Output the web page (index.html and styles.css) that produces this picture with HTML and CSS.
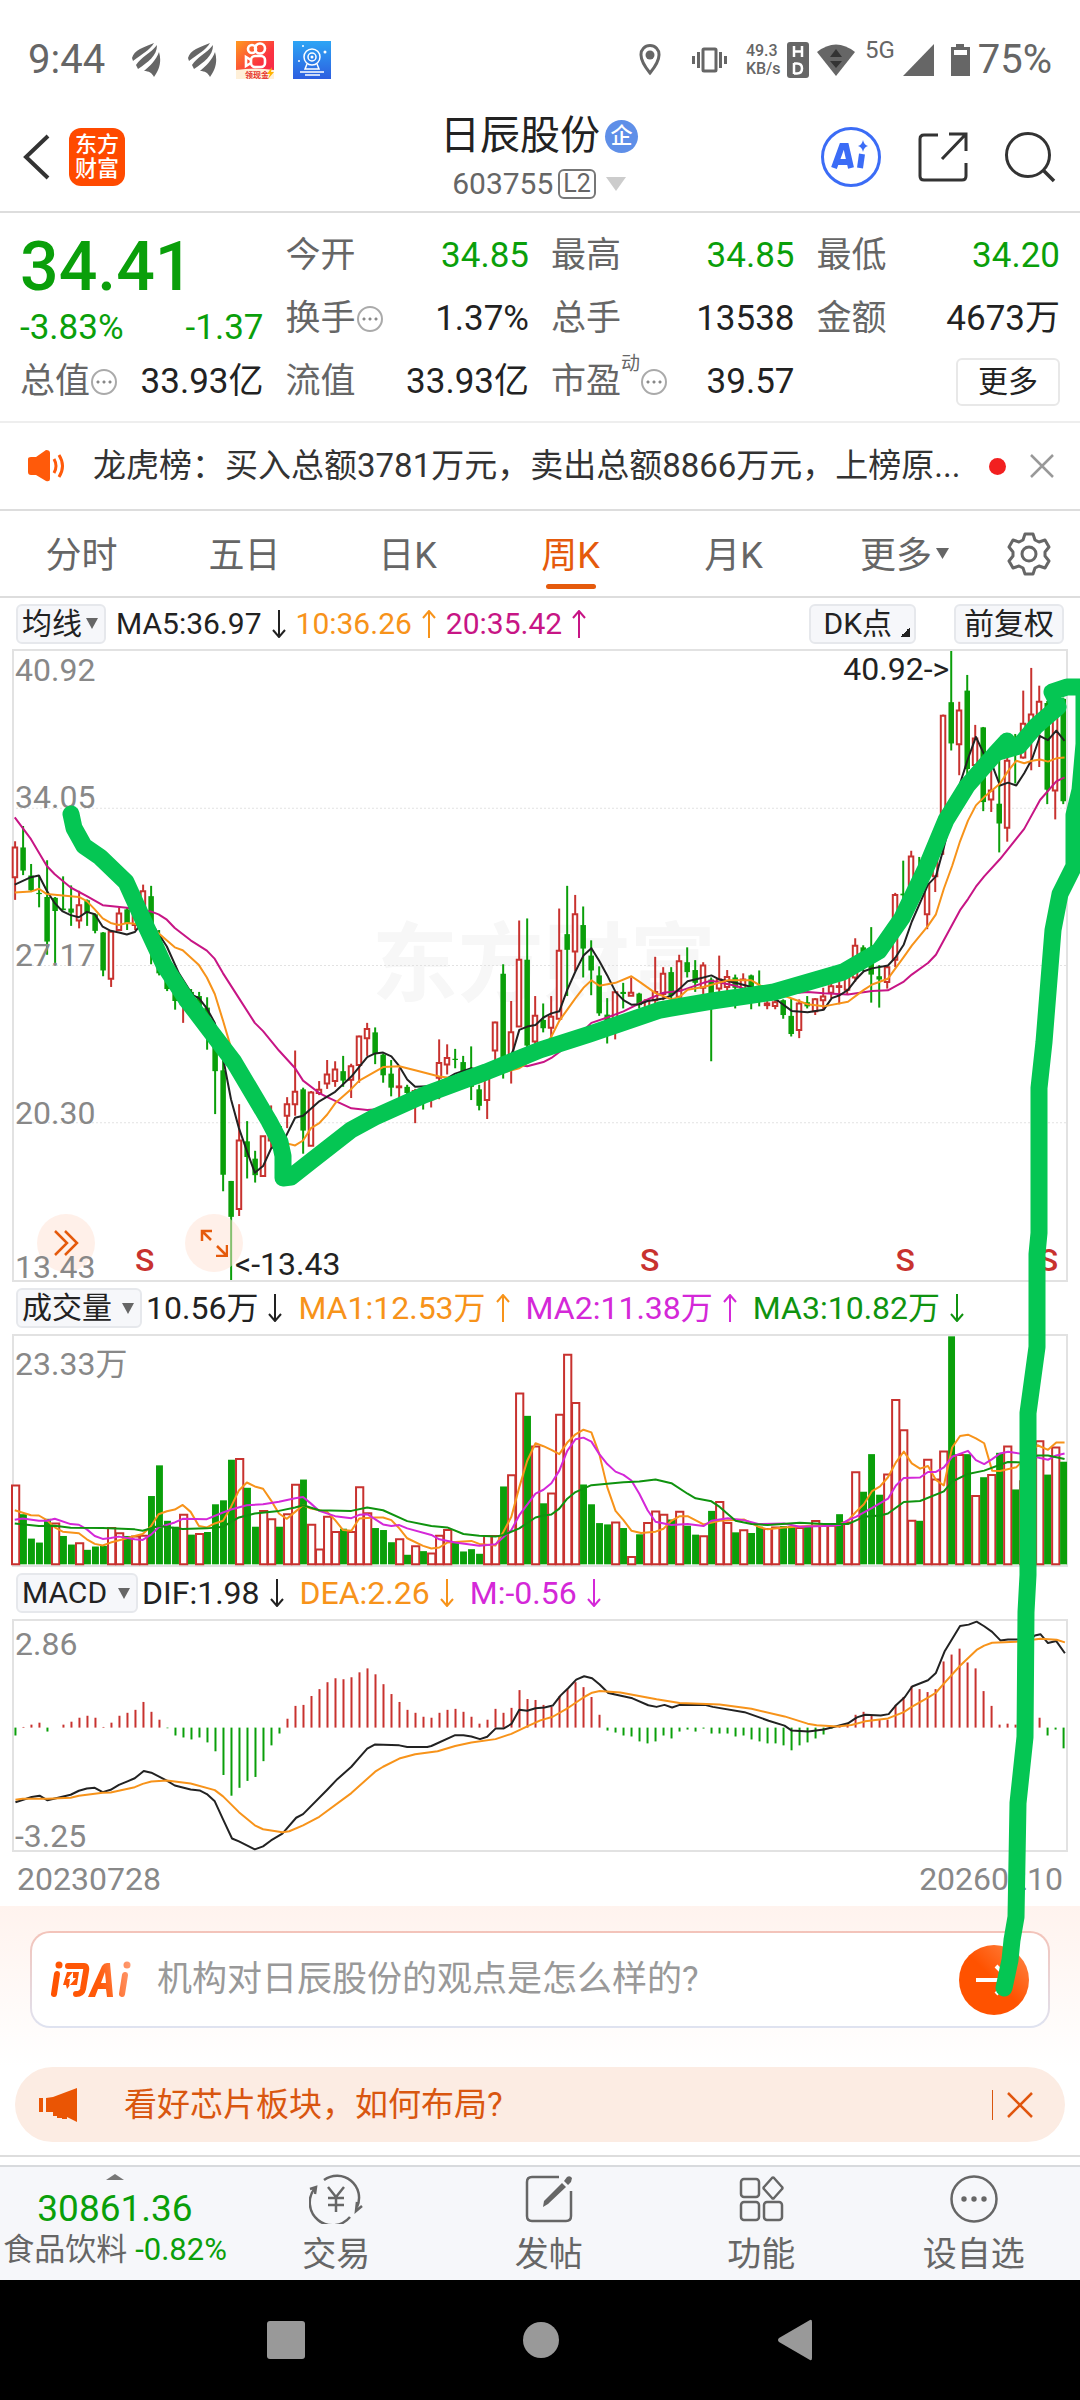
FILE: index.html
```html
<!DOCTYPE html>
<html lang="zh-CN">
<head>
<meta charset="utf-8">
<meta name="viewport" content="width=device-width, initial-scale=1">
<title>日辰股份 603755</title>
<link rel="stylesheet" href="styles.css">
</head>
<body>
<div class="page">

<div class="status">
  <span class="clock">9:44</span>
  <svg class="wing" width="30" height="34" viewBox="0 0 28 34"><path d="M0 15C2 7 12 4 22 0C18 7 10 11 1 18ZM4 22C9 14 19 10 25 2C25 13 16 19 6 26ZM12 28C18 23 24 17 27 9C30 19 27 27 22 34C20 30 17 28 12 28Z"/></svg>
  <svg class="wing" width="30" height="34" viewBox="0 0 28 34"><path d="M0 15C2 7 12 4 22 0C18 7 10 11 1 18ZM4 22C9 14 19 10 25 2C25 13 16 19 6 26ZM12 28C18 23 24 17 27 9C30 19 27 27 22 34C20 30 17 28 12 28Z"/></svg>
  <svg class="app" width="38" height="38" viewBox="0 0 38 38">
    <defs><linearGradient id="ks" x1="0" y1="0" x2="1" y2="1"><stop offset="0" stop-color="#ff9a1f"/><stop offset=".6" stop-color="#fb3340"/><stop offset="1" stop-color="#f5264f"/></linearGradient></defs>
    <rect width="38" height="38" fill="url(#ks)"/>
    <g fill="none" stroke="#fff" stroke-width="2.6"><circle cx="16" cy="8" r="4"/><circle cx="24" cy="7.500" r="5"/><rect x="15" y="15" width="14" height="11" rx="4"/><path d="M15 19L10 16V25L15 22"/></g>
    <path d="M0 29Q19 26 38 29V38H0Z" fill="#fff0d8"/>
    <text x="9" y="37" class="app-text">领现金</text>
    <path d="M36 26L31 33H34L32 38L38 31H35Z" fill="#ffb400"/>
  </svg>
  <svg class="app" width="38" height="38" viewBox="0 0 38 38">
    <defs><linearGradient id="cam" x1="0" y1="0" x2="0" y2="1"><stop offset="0" stop-color="#2da5f5"/><stop offset="1" stop-color="#2d5ee0"/></linearGradient></defs>
    <rect width="38" height="38" fill="url(#cam)"/>
    <g fill="none" stroke="#fff" stroke-width="1.500"><circle cx="19" cy="16" r="8"/><circle cx="19" cy="16" r="4"/><path d="M14 23L12 28H26L24 23M7 31H31M12 34H27"/></g>
    <g fill="#fff"><circle cx="19" cy="16" r="1.500"/><circle cx="10" cy="5" r="1"/><circle cx="32" cy="11" r="1.500"/><circle cx="6" cy="20" r="1"/></g>
  </svg>
  <span class="spacer"></span>
  <svg width="45" height="32" viewBox="0 0 45 32"><path d="M11 1.500A9 9 0 0 0 2 11C2 18 11 29 11 29S20 18 20 11A9 9 0 0 0 11 1.500Z" fill="none" stroke="#666" stroke-width="3"/><circle cx="11" cy="11" r="4.500" fill="#666"/></svg>
  <svg width="46" height="30" viewBox="0 0 46 30"><rect x="11" y="4" width="13" height="22" rx="1" fill="none" stroke="#666" stroke-width="3"/><path d="M1.500 11V19M6.500 7V23M28.500 7V23M33.500 11V19" stroke="#666" stroke-width="3"/></svg>
  <span class="speed">49.3<br>KB/s</span>
  <svg width="22" height="36" viewBox="0 0 22 36"><rect width="22" height="36" rx="3" fill="#666"/><path d="M7 4V15M15 4V15M7 9.500H15M7 21V32M7 21.500H10Q15 21.500 15 26.500T10 31.500H7" fill="none" stroke="#fff" stroke-width="2.500"/></svg>
  <svg width="40" height="32" viewBox="0 0 40 32"><path d="M0 8Q19 -7 38 8L19 32Z" fill="#666"/><path d="M13 13L19 5L25 13ZM13 17H25L19 24Z" fill="#333"/></svg>
  <span class="net">5G</span>
  <svg width="31" height="32" viewBox="0 0 31 32"><path d="M31 0V32H0Z" fill="#666"/></svg>
  <svg width="28" height="32" viewBox="0 0 28 32"><path d="M14 0H22V3H28V32H9V3H14Z" fill="#666"/><rect x="12" y="6" width="13" height="5" fill="#fff"/></svg>
  <span class="clock">75%</span>
</div>

<header class="head">
  <div class="head-left">
    <button class="icon" aria-label="返回"><svg width="28" height="46" viewBox="0 0 28 46"><path d="M26 2L4 23L26 44" fill="none" stroke="#333" stroke-width="4"/></svg></button>
    <a class="brand" href="#">东方<br>财富</a>
  </div>
  <div class="head-mid">
    <h1>日辰股份<span class="badge">企</span></h1>
    <div class="code">603755<span class="level">L2</span><svg width="20" height="14" viewBox="0 0 20 14"><path d="M0 0H20L10 14Z" fill="#ccc"/></svg></div>
  </div>
  <div class="head-right">
    <button class="icon" aria-label="AI"><svg width="62" height="62" viewBox="0 0 62 62"><circle cx="31" cy="31" r="28.500" fill="none" stroke="#3b6cf6" stroke-width="3"/><path d="M14 42L22 20H26L31 42M17 36H29" fill="none" stroke="#3b6cf6" stroke-width="6"/><path d="M42 28L40 42" stroke="#3b6cf6" stroke-width="6"/><path d="M43 14Q44 19 48 20Q44 21 43 26Q42 21 38 20Q42 19 43 14Z" fill="#3b6cf6"/></svg></button>
    <button class="icon" aria-label="分享"><svg width="50" height="50" viewBox="0 0 50 50"><path d="M20 3H6Q2 3 2 7V44Q2 48 6 48H44Q48 48 48 44V31M31 2H48V19M47 3L24 27" fill="none" stroke="#333" stroke-width="3"/></svg></button>
    <button class="icon" aria-label="搜索"><svg width="52" height="52" viewBox="0 0 52 52"><circle cx="24" cy="24" r="21.500" fill="none" stroke="#333" stroke-width="3"/><path d="M39 39L50 50" stroke="#333" stroke-width="3.500"/></svg></button>
  </div>
</header>

<section class="quote">
  <div class="price-box">
    <strong class="price">34.41</strong>
    <div class="pair down"><span>-3.83%</span><span>-1.37</span></div>
  </div>
  <div class="pair"><span>今开</span><b class="down">34.85</b></div>
  <div class="pair"><span>最高</span><b class="down">34.85</b></div>
  <div class="pair"><span>最低</span><b class="down">34.20</b></div>
  <div class="pair"><span>换手<i class="info"></i></span><b>1.37%</b></div>
  <div class="pair"><span>总手</span><b>13538</b></div>
  <div class="pair"><span>金额</span><b>4673万</b></div>
  <div class="pair"><span>总值<i class="info"></i></span><b>33.93亿</b></div>
  <div class="pair"><span>流值</span><b>33.93亿</b></div>
  <div class="pair"><span>市盈<sup>动</sup><i class="info"></i></span><b>39.57</b></div>
  <div class="pair"><button class="more">更多</button></div>
</section>

<div class="news">
  <svg width="38" height="32" viewBox="0 0 38 32"><path d="M0 9Q0 7 3 7H8L18 0Q22 0 22 3V29Q22 32 18 31L8 25H3Q0 25 0 22Z" fill="#ff5a0a"/><path d="M26 9Q30 16 26 23M31 5Q38 16 31 27" fill="none" stroke="#ff5a0a" stroke-width="3"/></svg>
  <a class="news-text" href="#">龙虎榜：买入总额3781万元，卖出总额8866万元，上榜原...</a>
  <span class="dot"></span>
  <button class="icon" aria-label="关闭"><svg width="24" height="24" viewBox="0 0 24 24"><path d="M1 1L23 23M23 1L1 23" stroke="#999" stroke-width="2.500"/></svg></button>
</div>

<nav class="tabs">
  <a href="#">分时</a>
  <a href="#">五日</a>
  <a href="#">日K</a>
  <a href="#" class="on">周K</a>
  <a href="#">月K</a>
  <a href="#" class="menu">更多<svg width="13" height="20" viewBox="0 0 13 20"><path d="M0 2H13L6.500 13Z" fill="#666"/></svg></a>
  <button class="icon" aria-label="设置"><svg width="44" height="44" viewBox="0 0 44 44"><g fill="none" stroke="#666" stroke-width="3" stroke-linejoin="round"><path d="M18 2H26L28 8L32 10L38 8L42 15L38 20V24L42 29L38 36L32 34L28 36L26 42H18L16 36L12 34L6 36L2 29L6 24V20L2 15L6 8L12 10L16 8Z"/><circle cx="22" cy="22" r="7"/></g></svg></button>
</nav>

<div class="legend small">
  <span class="drop"><select aria-label="均线"><option>均线</option></select></span>
  <span class="c-black">MA5:36.97<svg class="arr" viewBox="0 0 14 28"><path d="M7 0V27M1 20L7 27L13 20"/></svg></span>
  <span class="c-orange">10:36.26<svg class="arr" viewBox="0 0 14 28"><path d="M7 28V1M1 8L7 1L13 8"/></svg></span>
  <span class="c-pink">20:35.42<svg class="arr" viewBox="0 0 14 28"><path d="M7 28V1M1 8L7 1L13 8"/></svg></span>
  <span class="spacer"></span>
  <button class="chip corner">DK点</button>
  <button class="chip">前复权</button>
</div>

<div class="chart k-chart">
  <span class="mark-bg">东方财富</span>
  <svg id="kline" class="plot" viewBox="36 24 3062 1524" preserveAspectRatio="none"></svg>
  <span class="axis a1">40.92</span>
  <span class="axis a2">34.05</span>
  <span class="axis a3">27.17</span>
  <span class="axis a4">20.30</span>
  <button class="round r1" aria-label="展开"><svg width="26" height="28" viewBox="0 0 26 28"><path d="M2 2L14 14L2 26M12 2L24 14L12 26" fill="none" stroke="#e55a0c" stroke-width="2.500"/></svg></button>
  <button class="round r2" aria-label="全屏"><svg width="28" height="28" viewBox="0 0 28 28"><path d="M12 2H2V12M2 2L11 11M16 27H27V16M27 27L17 17" fill="none" stroke="#e55a0c" stroke-width="2.500"/></svg></button>
  <span class="axis a5">13.43</span>
  <span class="tip high">40.92-&gt;</span>
  <span class="tip low">&lt;-13.43</span>
  <b class="sell s1">S</b><b class="sell s2">S</b><b class="sell s3">S</b><b class="sell s4">S</b>
</div>

<div class="legend">
  <span class="drop wide"><select aria-label="成交量"><option>成交量</option></select></span>
  <span class="c-black">10.56万<svg class="arr" viewBox="0 0 14 28"><path d="M7 0V27M1 20L7 27L13 20"/></svg></span>
  <span class="c-orange">MA1:12.53万<svg class="arr" viewBox="0 0 14 28"><path d="M7 28V1M1 8L7 1L13 8"/></svg></span>
  <span class="c-purple">MA2:11.38万<svg class="arr" viewBox="0 0 14 28"><path d="M7 28V1M1 8L7 1L13 8"/></svg></span>
  <span class="c-green">MA3:10.82万<svg class="arr" viewBox="0 0 14 28"><path d="M7 0V27M1 20L7 27L13 20"/></svg></span>
</div>
<div class="chart sub-chart">
  <svg id="volume" class="plot" viewBox="36 162 3062 694" preserveAspectRatio="none"></svg>
  <span class="axis v1">23.33万</span>
</div>

<div class="legend">
  <span class="drop wide"><select aria-label="MACD"><option>MACD</option></select></span>
  <span class="c-black">DIF:1.98<svg class="arr" viewBox="0 0 14 28"><path d="M7 0V27M1 20L7 27L13 20"/></svg></span>
  <span class="c-orange">DEA:2.26<svg class="arr" viewBox="0 0 14 28"><path d="M7 0V27M1 20L7 27L13 20"/></svg></span>
  <span class="c-purple">M:-0.56<svg class="arr" viewBox="0 0 14 28"><path d="M7 0V27M1 20L7 27L13 20"/></svg></span>
</div>
<div class="chart sub-chart">
  <svg id="macd" class="plot" viewBox="36 147 3062 696" preserveAspectRatio="none"></svg>
  <span class="axis m1">2.86</span>
  <span class="axis m2">-3.25</span>
</div>
<div class="dates"><span>20230728</span><span>20260210</span></div>

<section class="ask">
  <form class="ask-box">
    <svg width="80" height="38" viewBox="0 0 80 38">
      <defs><linearGradient id="ai" gradientUnits="userSpaceOnUse" x1="0" y1="30" x2="80" y2="8"><stop offset="0" stop-color="#ff5200"/><stop offset=".6" stop-color="#ff5a0a"/><stop offset="1" stop-color="#ff9a70"/></linearGradient></defs>
      <g fill="none" stroke="url(#ai)" stroke-width="6" stroke-linejoin="round" stroke-linecap="round"><path d="M6 13L3 33M17 5H33Q36 5 35 10L32 28Q31 33 25 33M74 14L71 33"/></g>
      <g fill="url(#ai)"><circle cx="8" cy="4" r="3.500"/><circle cx="76" cy="4" r="3.500"/><path d="M16 11H28L26 24H19L16 28L15 24H12Z"/><path fill-rule="evenodd" d="M37 36L51 5Q53 2 56 2H59L62 36H56L55 28H47L44 36ZM50 22H55L54 11Z"/></g>
      <path d="M22 11L16 18H19L18 25L25 17H22Z" fill="#fff"/>
    </svg>
    <input type="text" aria-label="问AI" placeholder="机构对日辰股份的观点是怎么样的?">
    <button type="button" class="send" aria-label="发送"><svg width="36" height="32" viewBox="0 0 36 32"><path d="M0 16H34M20 2L34 16L20 30" fill="none" stroke="#fff" stroke-width="4"/></svg></button>
  </form>
</section>

<div class="promo">
  <svg width="40" height="34" viewBox="0 0 40 34"><path d="M0 10H4V24H0ZM7 10L14 9L38 0V34L30 30L28 29V31H23V30H18V28H14V24H7Z" fill="#ea5504"/></svg>
  <a href="#">看好芯片板块，如何布局?</a>
  <span class="bar"></span>
  <button class="icon" aria-label="关闭"><svg width="26" height="26" viewBox="0 0 26 26"><path d="M1 1L25 25M25 1L1 25" stroke="#e0560f" stroke-width="2.500"/></svg></button>
</div>

<nav class="bottom">
  <a class="index" href="#">
    <svg width="18" height="6" viewBox="0 0 18 6"><path d="M0 6H18L9 0Z" fill="#777"/></svg>
    <span class="idx-num">30861.36</span>
    <span class="idx-row">食品饮料<em>-0.82%</em></span>
  </a>
  <a href="#"><svg width="54" height="50" viewBox="0 0 54 50"><g fill="none" stroke="#666" stroke-width="2.500"><path d="M15 6A22 22 0 0 1 48 33M41 43A22 22 0 0 1 6 14M1 15L7 13L6 20M53 32L47 37L48 28M19 13L27 23L35 13M27 23V38M19 24H35M19 31H35"/></g></svg>交易</a>
  <a href="#"><svg width="48" height="50" viewBox="0 0 48 50"><path d="M34 3H7Q2 3 2 8V42Q2 47 7 47H41Q46 47 46 42V17" fill="none" stroke="#666" stroke-width="2.500"/><path d="M18 33L19 27L37 9L41 13L23 30ZM39 7L42 3Q45 1 47 4L46 8L43 11Z" fill="#666"/></svg>发帖</a>
  <a href="#"><svg width="46" height="50" viewBox="0 0 46 50"><g fill="none" stroke="#666" stroke-width="2.500"><rect x="3" y="5" width="18" height="18" rx="3"/><rect x="3" y="28" width="18" height="18" rx="3"/><rect x="26" y="28" width="18" height="18" rx="3"/><path d="M34 4Q35 3 36 4L44 13Q45 14 44 15L36 24Q35 25 34 24L26 15Q25 14 26 13Z"/></g></svg>功能</a>
  <a href="#"><svg width="50" height="50" viewBox="0 0 50 50"><circle cx="25" cy="25" r="22.500" fill="none" stroke="#666" stroke-width="2.500"/><g fill="#666"><circle cx="15" cy="25" r="2.700"/><circle cx="25" cy="25" r="2.700"/><circle cx="35" cy="25" r="2.700"/></g></svg>设自选</a>
</nav>

<div class="sys">
  <button class="icon" aria-label="最近任务"><svg width="38" height="38" viewBox="0 0 38 38"><rect width="38" height="38" rx="3" fill="#999"/></svg></button>
  <button class="icon" aria-label="主页"><svg width="36" height="36" viewBox="0 0 36 36"><circle cx="18" cy="18" r="18" fill="#999"/></svg></button>
  <button class="icon" aria-label="后退"><svg width="36" height="42" viewBox="0 0 36 42"><path d="M2 19L33 1Q35 0 35 3V39Q35 42 33 41L2 23Q0 21 2 19Z" fill="#999"/></svg></button>
</div>

<!-- hand drawn trend stroke -->
<svg class="ink" viewBox="0 0 1080 2400" preserveAspectRatio="none">
  <path d="M71 814L74 828L84 846L100 857L126 882L145 924L164 965L186 999L234 1062L269 1121L280 1142L283 1156V1178L291 1177L310 1162L351 1130L375 1117L424 1095L486 1072L540 1050L590 1034L660 1010L712 1001L774 992L843 972L879 951L902 918L926 868L946 820L967 786L995 754L1007 741L998 752L1019 746L1036 726L1058 707L1055 698L1052 692L1067 687H1084V744L1080 790L1074 815V866L1060 894L1053 930L1044 1042L1039 1088V1233L1037 1254V1347L1028 1413V1575L1026 1612L1025 1737L1018 1803L1016 1917L1012 1940L1010 1960L1004 1988"/>
</svg>
</div>
<script src="chart.js"></script>
</body>
</html>
```
FILE: styles.css
```css
* {
  box-sizing: border-box;
}
body {
  margin: 0;
  background: #fff;
  color: #222;
  font-family: Roboto, "Noto Sans CJK SC", sans-serif;
  font-size: 35px;
  line-height: 44px;
}
a {
  color: inherit;
  text-decoration: none;
}
svg {
  display: block;
  flex: none;
}
button, input, select {
  margin: 0;
  padding: 0;
  border: 0;
  background: none;
  color: inherit;
  font: inherit;
}
.page {
  position: relative;
  overflow: hidden;
}
.icon {
  display: flex;
  justify-content: center;
  align-items: center;
}
.spacer {
  flex: 1;
}
.down {
  color: #0a9f0a;
}

/* status bar */
.status {
  display: flex;
  align-items: center;
  gap: 8px;
  height: 110px;
  padding: 10px 28px 0;
  color: #666;
}
.clock {
  font-size: 40px;
}
.wing {
  margin-left: 18px;
  fill: #666;
}
.status .app {
  margin-left: 11px;
}
.app-text {
  font-size: 8px;
  font-weight: bold;
  fill: #e5322d;
}
.speed {
  width: 33px;
  font-size: 16px;
  line-height: 18px;
  font-weight: 500;
}
.net {
  align-self: flex-start;
  padding-top: 18px;
  font-size: 24px;
}

/* title bar */
.head {
  display: grid;
  grid-template-columns: 1fr auto 1fr;
  align-items: center;
  height: 103px;
  padding: 0 24px 0 22px;
  border-bottom: 2px solid #ddd;
}
.head-left, .head-right {
  display: flex;
  align-items: center;
  gap: 19px;
  padding-bottom: 8px;
}
.head-right {
  justify-content: flex-end;
  gap: 36px;
}
.brand {
  padding: 5px 6px;
  border-radius: 12px;
  background: #ff4a00;
  color: #fff;
  font-size: 22px;
  line-height: 24px;
  font-weight: 500;
}
.head-mid {
  padding-bottom: 5px;
}
h1 {
  display: flex;
  justify-content: center;
  align-items: center;
  gap: 5px;
  margin: 0;
  font-size: 40px;
  line-height: 52px;
  font-weight: 400;
}
.badge {
  width: 33px;
  height: 33px;
  border-radius: 50%;
  background: #5f8fe8;
  color: #fff;
  font-size: 22px;
  line-height: 32px;
  font-weight: 500;
  text-align: center;
}
.code {
  display: flex;
  justify-content: center;
  align-items: center;
  color: #666;
  font-size: 30px;
}
.level {
  margin: 0 10px 0 5px;
  padding: 0 3px;
  border: 2px solid #777;
  border-radius: 6px;
  font-size: 25px;
  line-height: 26px;
}

/* quote grid */
.quote {
  display: grid;
  grid-template-columns: repeat(4, 1fr);
  grid-auto-rows: 63px;
  column-gap: 22px;
  padding: 11px 20px 8px;
  border-bottom: 2px solid #eee;
}
.price-box {
  grid-row: span 2;
}
.price {
  display: block;
  padding-top: 4px;
  color: #0a9f0a;
  font-size: 68px;
  line-height: 78px;
  font-weight: 500;
}
.pair {
  display: flex;
  justify-content: space-between;
  align-items: center;
}
.pair span {
  display: flex;
  align-items: center;
  color: #666;
}
.pair.down span {
  color: #0a9f0a;
}
.pair b {
  font-weight: 400;
}
.pair sup {
  align-self: flex-start;
  margin-top: -8px;
  font-size: 19px;
  line-height: 24px;
}
.info {
  width: 26px;
  height: 26px;
  margin-left: 1px;
  border: 2px solid #aaa;
  border-radius: 50%;
  background: radial-gradient(circle, #888 1px, transparent 2px) center / 6px 22px repeat-x content-box;
  padding: 0 2px;
}
.more {
  margin-left: auto;
  padding: 0 20px;
  border: 2px solid #e8e8e8;
  border-radius: 6px;
  font-size: 30px;
}

/* news line */
.news {
  display: flex;
  align-items: center;
  height: 88px;
  padding: 0 26px 0 28px;
  border-bottom: 2px solid #ddd;
}
.news-text {
  flex: 1;
  overflow: hidden;
  padding-left: 27px;
  color: #333;
  font-size: 33px;
  white-space: nowrap;
}
.dot {
  width: 17px;
  height: 17px;
  margin-right: 24px;
  border-radius: 50%;
  background: #f22020;
}

/* period tabs */
.tabs {
  display: grid;
  grid-template-columns: repeat(6, 163fr) 102fr;
  height: 87px;
  border-bottom: 2px solid #ddd;
  color: #666;
  font-size: 36px;
}
.tabs a {
  display: flex;
  position: relative;
  justify-content: center;
  align-items: center;
  gap: 4px;
  padding-top: 4px;
}
.tabs .menu {
  padding-left: 16px;
}
.tabs .on {
  color: #e55a0c;
}
.tabs .on::after {
  content: "";
  position: absolute;
  bottom: 7px;
  width: 50px;
  height: 5px;
  border-radius: 3px;
  background: #e55a0c;
}

/* indicator rows */
.legend {
  display: flex;
  align-items: center;
  gap: 16px;
  height: 52px;
  padding: 0 16px;
  font-size: 32px;
}
.legend.small {
  gap: 10px;
  height: 51px;
  font-size: 30px;
}
.legend > span {
  display: flex;
  align-items: center;
  gap: 10px;
}
.arr {
  width: 14px;
  height: 28px;
  fill: none;
  stroke: currentColor;
  stroke-width: 2;
}
.chip, .drop {
  height: 40px;
  border: 2px solid #e6e8ec;
  border-radius: 6px;
  background: #f6f7fa;
  font-size: 30px;
  line-height: 34px;
}
.chip {
  padding: 0 8px;
}
.chip.corner {
  padding: 0 22px 0 12px;
  margin-right: 28px;
  background: linear-gradient(135deg, transparent 50%, #222 50%) right 4px bottom 5px / 10px 10px no-repeat #f6f7fa;
}
.drop {
  position: relative;
}
.legend .wide {
  margin-right: -12px;
}
.drop select {
  appearance: none;
  height: 36px;
  padding: 0 22px 0 4px;
}
.drop.wide select {
  padding-right: 28px;
}
.drop::after {
  content: "";
  position: absolute;
  right: 6px;
  border: 6px solid transparent;
  border-top: 11px solid #666;
  border-bottom: 0;
  pointer-events: none;
}
.c-black { color: #222; }
.c-orange { color: #f7931a; }
.c-pink { color: #c71585; }
.c-purple { color: #d428d8; }
.c-green { color: #0f930f; }

/* charts */
.chart {
  position: relative;
  margin: 0 12px;
  border: 2px solid #e2e2e2;
}
.k-chart {
  height: 633px;
}
.sub-chart {
  height: 233px;
}
.plot {
  position: absolute;
  top: 0;
  left: -2px;
  width: calc(100% + 4px);
  height: 100%;
  overflow: visible;
}
.plot * {
  vector-effect: non-scaling-stroke;
}
.plot .line {
  fill: none;
  stroke-width: 2;
  stroke-linejoin: round;
}
.plot .red { fill: #fff; stroke: #c8322f; stroke-width: 2; }
.plot .green { fill: #0a9f0a; }
.plot .wick-red { stroke: #c8322f; stroke-width: 2; }
.plot .wick-green { stroke: #0a9f0a; stroke-width: 2; }
.plot .grid { stroke: #e2e2e2; stroke-width: 1; stroke-dasharray: 2 2; }
.plot .black { stroke: #222; }
.plot .orange { stroke: #f7931a; }
.plot .pink { stroke: #c71585; }
.plot .purple { stroke: #d428d8; }
.plot .dark-green { stroke: #0f930f; }
.axis, .tip, .sell, .mark-bg, .round {
  position: absolute;
}
.axis {
  left: 1px;
  color: #888;
  font-size: 32px;
  line-height: 36px;
}
.a1 { top: 1px; }
.a2 { top: 128px; }
.a3 { top: 286px; }
.a4 { top: 444px; }
.a5 { top: 598px; }
.v1 { top: 10px; }
.m1 { top: 5px; }
.m2 { bottom: -4px; }
.tip {
  font-size: 32px;
  line-height: 36px;
}
.high { right: 11.1%; top: 0; }
.low { left: 21%; top: 595px; }
.sell {
  top: 591px;
  color: #c8322f;
  font-size: 32px;
  line-height: 36px;
  font-weight: 500;
}
.s1 { left: 11.5%; }
.s2 { left: 59.5%; }
.s3 { left: 83.8%; }
.s4 { left: 97.4%; }
.mark-bg {
  left: 34%;
  top: 270px;
  color: #f7f7f7;
  font-size: 86px;
  line-height: 90px;
  font-weight: 700;
  white-space: nowrap;
}
.round {
  display: flex;
  justify-content: center;
  align-items: center;
  top: 563px;
  width: 58px;
  height: 58px;
  border-radius: 50%;
  background: rgba(255, 226, 211, .5);
}
.r1 { left: 23px; }
.r2 { left: 171px; }
.dates {
  display: flex;
  justify-content: space-between;
  padding: 5px 17px;
  color: #888;
  font-size: 32px;
}

/* ask box */
.ask {
  padding: 25px 30px 39px;
  background: linear-gradient(#fff3ee, #fff);
}
.ask-box {
  display: flex;
  align-items: center;
  height: 97px;
  padding: 0 19px;
  border: 2px solid transparent;
  border-radius: 20px;
  background: linear-gradient(#fff, #fff) padding-box, linear-gradient(#f3c3b9, #dfe3f1) border-box;
}
.ask-box input {
  flex: 1;
  min-width: 0;
  padding-left: 26px;
  outline: 0;
}
.ask-box input::placeholder {
  color: #999;
  opacity: 1;
}
.send {
  display: flex;
  justify-content: center;
  align-items: center;
  width: 70px;
  height: 70px;
  border-radius: 50%;
  background: linear-gradient(45deg, #ff5200 50%, #ff8a4c);
}

/* promo strip */
.promo {
  display: flex;
  align-items: center;
  height: 75px;
  margin: 0 15px 13px;
  padding: 0 32px 0 24px;
  border-radius: 38px;
  background: #fcece3;
  color: #d9560f;
  font-size: 33px;
}
.promo a {
  flex: 1;
  padding-left: 45px;
}
.bar {
  width: 1px;
  height: 30px;
  margin-right: 14px;
  background: #d9560f;
}

/* bottom bar */
.bottom {
  display: flex;
  height: 125px;
  padding-top: 9px;
  border-top: 2px solid #ddd;
  background: linear-gradient(#fff 8px, #d8dadd 8px, #d8dadd 10px, #f6f7fa 10px);
  color: #666;
  font-size: 34px;
}
.bottom a {
  display: flex;
  flex: 1;
  flex-direction: column;
  align-items: center;
  gap: 8px;
  padding-top: 8px;
}
.bottom .index {
  flex: 0 0 230px;
  gap: 0;
}
.idx-num {
  padding-top: 7px;
  color: #0a9f0a;
  font-size: 37px;
}
.idx-row {
  display: flex;
  gap: 8px;
  font-size: 31px;
  line-height: 38px;
  white-space: nowrap;
}
.idx-row em {
  color: #0a9f0a;
  font-size: 31px;
  font-style: normal;
}
.sys {
  display: flex;
  justify-content: center;
  align-items: center;
  gap: 218px;
  height: 120px;
  background: #000;
}
.ink {
  position: absolute;
  inset: 0;
  width: 100%;
  height: 100%;
  pointer-events: none;
}
.ink path {
  fill: none;
  stroke: #05c653;
  stroke-width: 17;
  stroke-linecap: round;
  stroke-linejoin: round;
}
```
FILE: chart.js
```js
// week candles: colour, high, body top, body bottom, low (plot units, y grows down)
var candles = `r 485 500 572 627|g 448 500 556 567|g 540 568 604 608|g 568 610 613 645|g 531 620 728 760|g 620 622 654 780|g 570 648 652 652|g 592 648 658 690
r 605 640 677 696|g 626 628 658 690|g 660 662 702 708|g 705 706 798 812|r 702 704 818 838|r 645 660 700 702|g 645 650 685 700|r 620 640 688 700
r 590 606 650 680|g 593 618 690 783|g 700 720 805 810|g 760 780 843 848|g 800 810 872 893|r 840 845 880 925|g 843 850 880 895|g 850 860 885 900
g 863 888 930 990|g 930 945 1042 1146|g 1010 1040 1293 1333|g 1308 1308 1395 1548|r 1122 1210 1376 1393|g 1163 1212 1250 1302|g 1235 1254 1294 1312|r 1200 1200 1296 1296
r 1125 1150 1210 1230|g 1170 1175 1180 1200|r 1105 1122 1150 1180|r 992 1092 1122 1150|g 1082 1086 1186 1242|r 1090 1094 1223 1223|r 1066 1087 1095 1100|r 1015 1050 1072 1085
r 1018 1038 1066 1080|g 1005 1042 1065 1080|r 1024 1030 1063 1107|r 956 958 1027 1070|r 925 940 962 1005|g 936 948 1000 1025|g 1000 1002 1052 1070|g 1015 1048 1082 1103
r 1035 1079 1081 1110|g 1075 1080 1095 1110|r 1085 1090 1120 1168|g 1090 1095 1105 1135|r 1085 1095 1110 1130|r 965 1022 1058 1110|r 977 1010 1026 1050|g 988 1012 1015 1035
g 1005 1020 1045 1050|g 982 1040 1080 1112|g 1075 1086 1126 1137|r 1050 1055 1112 1158|r 922 924 992 1030|g 783 806 1030 1060|r 872 948 1030 1072|r 677 772 934 934
g 672 772 980 1000|r 860 908 970 985|g 878 918 938 948|r 860 910 937 1003|r 648 750 915 915|g 593 710 748 860|r 615 662 752 800|g 643 688 745 815
g 725 762 798 858|g 788 810 902 908|g 865 905 945 975|r 850 851 920 965|g 828 850 855 890|r 815 852 859 860|g 852 854 882 890|r 868 870 890 900
r 765 850 870 890|r 790 806 855 870|g 790 802 858 880|r 760 776 862 875|g 742 778 802 815|g 773 797 828 850|r 778 786 840 855|g 815 820 870 1018
r 762 820 842 860|r 797 814 838 850|g 808 815 840 890|r 805 820 845 870|g 808 810 850 892|g 798 835 870 885|r 865 878 882 892|r 868 875 884 892
g 868 870 906 915|g 865 908 952 958|r 868 878 942 962|g 860 875 885 890|r 865 868 897 906|r 840 861 870 893|r 830 836 852 865|r 825 836 838 880
r 800 810 845 855|r 720 738 815 825|g 737 742 790 800|g 693 770 808 876|g 785 812 820 888|r 785 790 826 842|r 610 615 772 790|g 532 612 616 680
r 508 522 600 650|g 523 560 600 620|r 498 590 662 698|r 500 510 570 608|r 178 181 430 518|g 24 148 248 265|r 147 168 250 325|g 82 120 310 330
r 203 236 300 330|g 208 209 390 412|r 310 362 384 414|g 290 394 442 512|r 270 290 452 486|g 225 245 262 345|r 120 200 282 285|r 65 178 210 313
r 108 147 200 305|g 145 150 360 395|r 160 170 362 432|g 137 140 388 395`.split(/[|\n]/);

var volumes = `r613 g702 g776 g788 g716 r728 g768 g794 r788 g810 g800 g798 r742 r758 g768 r768 r765 g647 g554 g722 g740 r702 g764 r760 g756 g672 g660 g537 r533 g622 g740 r690 r715
g740 r700 r611 g597 r732 r807 r708 r754 g746 r754 r618 r697 g744 g750 g787 r776 g825 r797 g814 r819 r765 r748 g788 g815 g808 g822 r766 r766 g618 r582 r334 g404 r495 g669 r637 r399 r217
r363 g612 g672 g729 g733 r725 g744 r830 g763 r727 r692 r702 g718 r693 g737 g764 r767 g692 r663 r727 g757 r749 g759 g740 r745 r740 g738 g738 r742 g738 r721 r735 r735 g702 r725 r573 g634
g520 g643 r580 r354 r446 r720 g722 r535 r595 r510 g163 r521 g520 r645 g590 r581 g516 r495 g627 r600 r600 r479 g582 r498 g543`.split(/\s+/);

var hist = [-24, 2, 9, 15, -12, 0, 9, 18, 30, 36, 30, 2, 15, 36, 45, 54, 78, 48, 24, -2, -24, -30, -36, -30, -45, -72, -144, -207, -183, -162, -150, -102, -54, -18,
  27, 66, 69, 96, 117, 138, 150, 147, 153, 168, 180, 162, 132, 102, 78, 54, 45, 33, 30, 45, 54, 57, 48, 33, 12, 24, 57, 45, 60, 114, 87, 84, 69, 63, 96, 117, 138, 123, 93, 39,
  -9, -15, -24, -27, -42, -48, -42, -24, -33, -12, -6, -12, -3, -18, -18, -18, -27, -24, -36, -42, -48, -48, -54, -69, -54, -45, -33, -21, -3,
  3, 12, 39, 48, 36, 24, 24, 69, 93, 126, 117, 108, 117, 201, 222, 240, 198, 180, 111, 66, 9, 12, 9, 0, 0, 30, -24, -6, -63];

var STEP = 23.2;
var FIRST = 45;

function rect(cls, x, y, w, h) {
  return '<rect class="' + cls + '" x="' + x + '" y="' + y + '" width="' + w + '" height="' + h + '"/>';
}
function vline(cls, x, y1, y2) {
  return '<line class="' + cls + '" x1="' + x + '" x2="' + x + '" y1="' + y1 + '" y2="' + y2 + '"/>';
}
function line(cls, points) {
  return '<polyline class="line ' + cls + '" points="' + points + '"/>';
}

// price
var out = '';
[405, 786, 1167].forEach(function (y) {
  out += '<line class="grid" x1="36" x2="3098" y1="' + y + '" y2="' + y + '"/>';
});
candles.forEach(function (c, i) {
  var p = c.split(' ');
  var x = FIRST + i * STEP;
  var red = p[0] === 'r';
  out += vline(red ? 'wick-red' : 'wick-green', x, p[1], p[4]);
  out += red ? rect('red', x - 7, p[2], 13, p[3] - p[2]) : rect('green', x - 8, p[2], 16, p[3] - p[2]);
});
out += line('pink', '44,427 91,480 137,545 160,565 206,597 253,618 299,640 369,646 438,655 461,662 485,675 508,695 554,725 601,750 624,770 648,805 694,865 740,925 764,945 810,992 857,1035 880,1065 927,1095 950,1105 1020,1132 1066,1136 1160,1130 1252,1100 1345,1060 1461,1042 1507,1027 1530,1030 1577,1020 1600,1010 1640,985 1716,925 1762,912 1809,897 1879,868 1925,852 1972,848 2041,828 2064,823 2134,835 2180,848 2274,855 2343,850 2390,853 2460,856 2530,848 2576,846 2622,825 2645,808 2692,780 2715,760 2785,652 2808,625 2831,595 2855,570 2901,528 2971,455 3017,385 3064,340 3088,330');
out += line('black', '44,590 91,572 114,568 137,605 160,635 183,655 206,664 230,669 253,656 276,662 299,692 322,702 346,706 369,711 392,705 415,680 438,680 485,740 520,805 560,858 578,865 601,890 624,925 648,1010 671,1110 694,1180 717,1235 740,1288 764,1272 787,1230 830,1200 857,1155 880,1150 927,1115 973,1092 1020,1055 1066,1008 1089,999 1112,997 1136,1006 1159,1030 1182,1062 1205,1080 1260,1078 1321,1048 1368,1035 1420,1045 1461,1040 1490,990 1507,942 1530,934 1554,930 1577,912 1600,902 1623,897 1646,845 1670,800 1693,762 1716,744 1739,775 1762,810 1786,850 1809,870 1832,881 1855,880 1879,872 1925,866 1950,858 1972,842 1995,824 2041,815 2064,810 2088,820 2134,828 2180,838 2227,860 2258,872 2297,896 2343,899 2390,893 2413,865 2436,858 2460,845 2483,820 2506,800 2530,793 2576,786 2599,765 2622,735 2645,680 2692,590 2715,570 2738,500 2762,420 2785,345 2808,285 2831,232 2855,275 2878,300 2901,350 2924,343 2948,350 2971,320 2994,285 3017,230 3040,240 3064,217 3088,242');
out += line('orange', '44,609 91,607 114,600 137,613 206,618 230,620 253,630 276,650 299,672 322,683 346,688 369,683 392,685 438,695 461,708 508,742 531,749 578,785 601,815 624,855 648,920 671,985 717,1080 787,1170 833,1217 857,1222 880,1210 903,1180 927,1168 950,1147 973,1120 1020,1085 1043,1065 1089,1043 1112,1032 1159,1030 1205,1040 1275,1055 1321,1060 1391,1070 1438,1050 1507,1035 1554,1010 1600,958 1623,920 1670,865 1693,840 1716,822 1739,835 1786,828 1832,812 1855,825 1902,853 1948,868 1972,862 1995,845 2041,838 2111,822 2180,822 2227,845 2297,866 2343,880 2390,885 2460,874 2506,845 2530,832 2576,818 2622,765 2645,738 2692,690 2715,662 2738,600 2762,545 2785,485 2808,435 2831,398 2855,378 2901,345 2924,315 2948,290 2971,296 2994,290 3017,287 3040,292 3064,284 3088,282');
document.getElementById('kline').innerHTML = out;

// volume
out = '';
volumes.forEach(function (v, i) {
  var x = FIRST + i * STEP;
  var top = +v.slice(1);
  out += v[0] === 'r' ? rect('red', x - 9, top + 2, 21, 852 - top) : rect('green', x - 9, top, 20, 854 - top);
});
out += line('orange', '44,690 91,705 114,706 137,720 160,742 183,755 230,760 253,778 276,792 299,797 322,788 369,775 392,768 415,762 438,740 461,702 485,693 508,688 531,674 554,695 578,738 601,742 624,730 648,722 671,680 694,630 717,606 740,618 764,625 787,660 810,700 833,716 857,695 880,675 903,685 950,695 973,720 996,750 1020,752 1043,715 1089,712 1112,712 1136,720 1159,745 1182,775 1228,798 1252,806 1275,803 1298,788 1368,783 1391,792 1438,797 1461,755 1484,710 1507,620 1530,540 1554,487 1577,496 1600,507 1623,520 1646,485 1670,460 1693,446 1716,454 1739,520 1762,620 1786,692 1809,720 1832,752 1860,759 1902,755 1925,746 1948,722 1972,708 1995,708 2041,733 2088,722 2158,718 2200,740 2227,748 2274,742 2343,738 2436,732 2460,722 2483,695 2506,672 2530,632 2553,618 2576,590 2599,545 2622,512 2645,548 2669,564 2692,556 2715,598 2738,615 2762,500 2785,465 2808,461 2831,472 2855,487 2878,570 2901,571 2948,560 3010,493 3040,507 3064,485 3088,485');
out += line('purple', '44,719 67,715 114,722 137,722 160,716 206,732 230,734 253,748 276,768 299,777 322,774 346,770 392,778 415,780 438,765 461,742 508,727 531,716 601,717 648,697 671,688 717,675 764,672 810,664 857,654 880,650 903,670 927,692 973,708 1020,714 1043,704 1066,702 1112,733 1136,738 1159,735 1182,745 1252,765 1275,778 1321,788 1391,798 1438,793 1484,750 1507,705 1554,640 1577,628 1600,608 1623,570 1646,510 1670,475 1693,470 1716,482 1739,520 1762,550 1786,573 1809,583 1832,600 1855,640 1879,690 1902,725 1948,735 1995,732 2041,738 2064,722 2111,714 2158,720 2200,732 2274,730 2320,740 2390,738 2436,735 2460,720 2483,710 2530,683 2576,655 2599,615 2622,592 2669,591 2692,574 2715,574 2738,560 2762,528 2808,510 2831,538 2855,550 2878,535 2901,518 2924,513 2970,520 3017,532 3040,537 3064,524 3088,518');
out += line('dark-green', '44,730 114,738 160,737 206,743 299,744 392,748 415,752 461,738 531,747 601,745 648,740 694,712 740,700 810,692 857,682 880,675 927,690 1020,692 1066,682 1112,690 1182,723 1252,738 1298,742 1345,762 1391,767 1438,770 1461,765 1507,745 1554,712 1577,706 1600,703 1623,685 1646,655 1670,635 1716,614 1762,610 1809,605 1855,603 1902,597 1948,608 1995,640 2018,654 2064,663 2088,680 2134,722 2180,732 2227,735 2320,728 2390,732 2460,732 2506,710 2553,706 2576,700 2622,665 2669,662 2738,633 2762,603 2808,580 2855,570 2901,552 2924,544 2970,545 3010,524 3040,524 3088,535');
document.getElementById('volume').innerHTML = out;

// macd, zero line at 471
out = '';
hist.forEach(function (h, i) {
  out += vline(h > 0 ? 'wick-red' : 'wick-green', FIRST + 1 + i * STEP, 471, 471 - h);
});
out += line('black', '46,698 93,682 116,678 139,692 206,675 230,663 253,656 276,654 299,667 322,660 346,645 369,635 392,625 418,603 440,608 485,632 508,647 554,659 580,662 601,673 624,695 648,750 674,808 694,817 740,841 764,832 787,814 820,793 860,745 880,734 950,660 980,627 1020,590 1043,562 1066,535 1089,522 1136,524 1159,525 1182,530 1240,530 1252,527 1321,494 1345,494 1368,498 1393,506 1414,499 1438,474 1461,474 1484,460 1507,417 1530,420 1554,412 1580,410 1604,404 1627,373 1650,350 1672,325 1695,315 1718,321 1740,340 1765,366 1835,382 1881,403 1905,408 1928,402 1950,410 1972,402 2045,402 2068,408 2160,424 2230,450 2276,465 2297,480 2345,483 2390,477 2460,458 2486,440 2510,432 2555,434 2578,430 2600,402 2625,378 2646,346 2692,327 2715,305 2740,240 2785,162 2810,158 2833,149 2855,163 2878,180 2902,206 2924,203 2990,203 3002,191 3018,187 3040,214 3064,208 3089,245');
out += line('orange', '46,690 67,687 139,687 206,684 230,678 299,669 322,668 392,652 415,642 440,635 485,632 554,641 624,661 648,680 694,728 740,768 764,780 820,789 840,786 880,768 927,742 1020,670 1089,605 1112,590 1159,565 1205,552 1270,543 1321,527 1368,516 1438,506 1484,490 1530,467 1568,449 1604,438 1650,410 1695,378 1718,365 1740,360 1800,364 1905,385 1972,396 2088,401 2180,414 2276,437 2343,459 2369,464 2430,468 2470,463 2510,452 2576,443 2622,424 2646,407 2692,380 2715,365 2740,335 2785,283 2833,235 2855,222 2878,213 2948,210 3018,201 3065,204 3089,212');
document.getElementById('macd').innerHTML = out;
```
